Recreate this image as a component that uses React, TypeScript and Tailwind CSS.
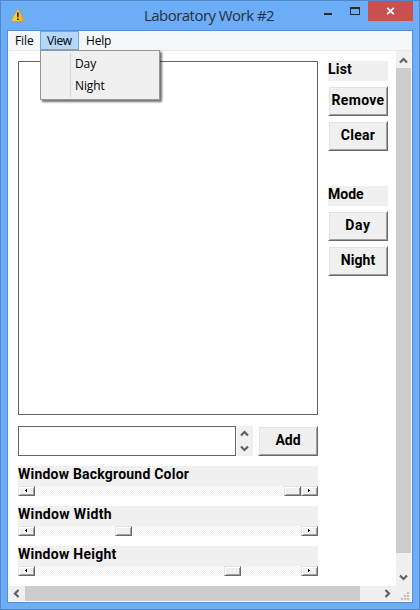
import type { ReactNode } from "react";

const systemFont = "font-['Roboto',sans-serif] font-bold text-[14px] text-black whitespace-nowrap";

function Chevron({ dir }: { dir: "up" | "down" | "left" | "right" }) {
  const turn = { up: 0, right: 90, down: 180, left: 270 }[dir];
  return (
    <svg width="9" height="9" viewBox="0 0 9 9" className="block shrink-0">
      <path d="M1 6.5 L4.5 3 L8 6.5" fill="none" stroke="#606060" strokeWidth="2.2" transform={`rotate(${turn} 4.5 4.5)`} />
    </svg>
  );
}

function Label({ children, spacing }: { children: ReactNode; spacing: string }) {
  return (
    <div className={`h-5 bg-[#f0f0f0] leading-[17px] ${systemFont} ${spacing}`}>{children}</div>
  );
}

function Button({ children, spacing }: { children: ReactNode; spacing: string }) {
  return (
    <button
      className={`flex h-[30px] w-[60px] shrink-0 items-center justify-center border-t border-l border-t-white border-l-white border-r border-b border-r-[#696969] border-b-[#696969] bg-[#f0f0f0] pb-px shadow-[inset_1px_1px_#e3e3e3,inset_-1px_-1px_#a0a0a0] ${systemFont} ${spacing}`}
    >
      {children}
    </button>
  );
}

function Knob({ arrow }: { arrow?: "left" | "right" }) {
  return (
    <div className="flex h-[10px] w-[17px] shrink-0 items-center justify-center border border-t-[#e3e3e3] border-l-[#e3e3e3] border-r-[#696969] border-b-[#696969] bg-[#f0f0f0] shadow-[inset_1px_1px_#ffffff,inset_-1px_-1px_#a0a0a0]">
      {arrow && (
        <svg width="3" height="4" viewBox="0 0 3 4" shapeRendering="crispEdges">
          <path d={arrow === "left" ? "M2 0v3H1V2H0V1h1V0z" : "M0 0v3h1V2h1V1H1V0z"} fill="#000" />
        </svg>
      )}
    </div>
  );
}

function Slider({ label, spacing, gap }: { label: string; spacing: string; gap: string }) {
  return (
    <div className="h-[30px] w-[300px]">
      <Label spacing={spacing}>{label}</Label>
      <div className="flex h-[10px] bg-[repeating-conic-gradient(#f0f0f0_0_25%,#ffffff_0_50%)] bg-[length:2px_2px]">
        <Knob arrow="left" />
        <div className={`shrink-0 ${gap}`} />
        <Knob />
        <div className="flex-1" />
        <Knob arrow="right" />
      </div>
    </div>
  );
}

function TitleBar() {
  return (
    <div className="flex h-[29px] items-start">
      <svg width="16" height="16" viewBox="0 0 16 16" className="mt-[7px] ml-[9px] shrink-0">
        <defs>
          <linearGradient id="warn" x1="0" y1="0" x2="1" y2="0">
            <stop offset="0" stopColor="#ffd84a" />
            <stop offset="0.5" stopColor="#ffcf20" />
            <stop offset="1" stopColor="#e99a00" />
          </linearGradient>
        </defs>
        <path d="M7.5 1.6h.9L14.7 13.2H1.2z" fill="url(#warn)" stroke="#d9a42a" strokeWidth=".7" strokeLinejoin="round" />
        <path d="M.7 13.6h14.5" stroke="#98a39a" />
        <path d="M6.9 4.6h2L8.5 9.4H7.3z" fill="#222" />
        <path d="M7 10.4h1.8V12H7z" fill="#222" />
      </svg>
      <h1 className="flex-1 pt-[4px] pl-[118px] font-['Open_Sans',sans-serif] text-[15px] leading-[20px] tracking-[-0.54px] whitespace-nowrap text-[#27313c]">
        Laboratory Work #2
      </h1>
      <div className="mt-[12px] mr-[18px] h-[2px] w-[8px] shrink-0 bg-[#1f2937]" />
      <div className="mt-[6px] mr-[8px] h-[8px] w-[10px] shrink-0 border border-t-2 border-[#1f2937]" />
      <div className="mr-[6px] flex h-[20px] w-[45px] shrink-0 items-center justify-center bg-[#c75050]">
        <svg width="9" height="8" viewBox="0 0 9 8">
          <path d="M1.2 .8l6.6 6.4M7.8 .8L1.2 7.2" stroke="#fff" strokeWidth="1.8" />
        </svg>
      </div>
    </div>
  );
}

function MenuBar() {
  return (
    <nav className="flex h-[20px] border-b border-[#e8e8e8] bg-[#f5f6f7] font-['Open_Sans',sans-serif] text-[12px] leading-[20px] text-black">
      <div className="w-[32px] pl-[7px] tracking-[-0.1px]">File</div>
      <div className="relative w-[39px] bg-[#b5d7f9] pl-[7px] tracking-[-0.35px] shadow-[inset_0_0_0_1px_#69a9e8]">
        View
        <div className="absolute top-[19px] left-0 z-10 flex h-[50px] w-[120px] border border-[#979797] bg-[#f0f0f0] shadow-[2px_2px_2px_#00000090]">
          <div className="my-[2px] ml-[29px] w-px bg-[#d7d7d7]" />
          <div className="ml-[4px] pt-[2px] leading-[22px] tracking-[-0.1px]">
            <div>Day</div>
            <div>Night</div>
          </div>
        </div>
      </div>
      <div className="pl-[7px] tracking-[-0.2px]">Help</div>
    </nav>
  );
}

export default function App() {
  return (
    <div className="h-[610px] w-[420px] border border-[#5188c8] bg-[#6badf6]">
      <TitleBar />
      <div className="ml-[6px] h-[573px] w-[406px] border border-[#4d91df] bg-white">
        <MenuBar />
        <div className="flex h-[535px]">
          <main className="flex w-[388px] gap-[10px] pt-[10px] pl-[10px]">
            <div className="w-[300px] shrink-0">
              <div className="h-[354px] border border-[#646464] bg-white" />
              <div className="mt-[11px] flex h-[30px]">
                <div className="w-[218px] border border-[#646464] bg-white" />
                <div className="ml-px flex w-[16px] flex-col items-center justify-between bg-[#f0f0f0] py-[3px] pr-px">
                  <Chevron dir="up" />
                  <Chevron dir="down" />
                </div>
                <div className="ml-[5px]">
                  <Button spacing="tracking-[-0.1px]">Add</Button>
                </div>
              </div>
              <div className="mt-[10px] flex flex-col gap-[10px]">
                <Slider label="Window Background Color" spacing="tracking-[0.22px]" gap="w-[249px]" />
                <Slider label="Window Width" spacing="tracking-[0.35px]" gap="w-[80px]" />
                <Slider label="Window Height" spacing="tracking-[0.27px]" gap="w-[189px]" />
              </div>
            </div>
            <aside className="flex w-[60px] shrink-0 flex-col gap-[5px]">
              <Label spacing="tracking-[0.2px]">List</Label>
              <Button spacing="tracking-[0.3px]">Remove</Button>
              <Button spacing="tracking-[0.25px]">Clear</Button>
              <div className="mt-[30px]">
                <Label spacing="tracking-[0px]">Mode</Label>
              </div>
              <Button spacing="tracking-[0.7px]">Day</Button>
              <Button spacing="tracking-[0.1px]">Night</Button>
            </aside>
          </main>
          <div className="flex w-[15px] flex-col items-center bg-[#f0f0f0]">
            <div className="flex h-[17px] items-center pt-px">
              <Chevron dir="up" />
            </div>
            <div className="h-[485px] w-full bg-[#cdcdcd]" />
            <div className="flex flex-1 items-end pb-[4px]">
              <Chevron dir="down" />
            </div>
          </div>
        </div>
        <div className="flex h-[15px] w-[403px] items-center bg-[#f0f0f0]">
          <div className="flex w-[17px] justify-center">
            <Chevron dir="left" />
          </div>
          <div className="h-full w-[335px] bg-[#cdcdcd]" />
          <div className="flex w-[36px] justify-end pr-[4px]">
            <Chevron dir="right" />
          </div>
          <svg width="15" height="15" viewBox="0 0 15 15" className="shrink-0" shapeRendering="crispEdges">
            <path d="M11 6h2v2h-2zM8 9h2v2H8zM11 9h2v2h-2zM5 12h2v2H5zM8 12h2v2H8zM11 12h2v2h-2z" fill="#bfbfbf" />
          </svg>
        </div>
      </div>
    </div>
  );
}
